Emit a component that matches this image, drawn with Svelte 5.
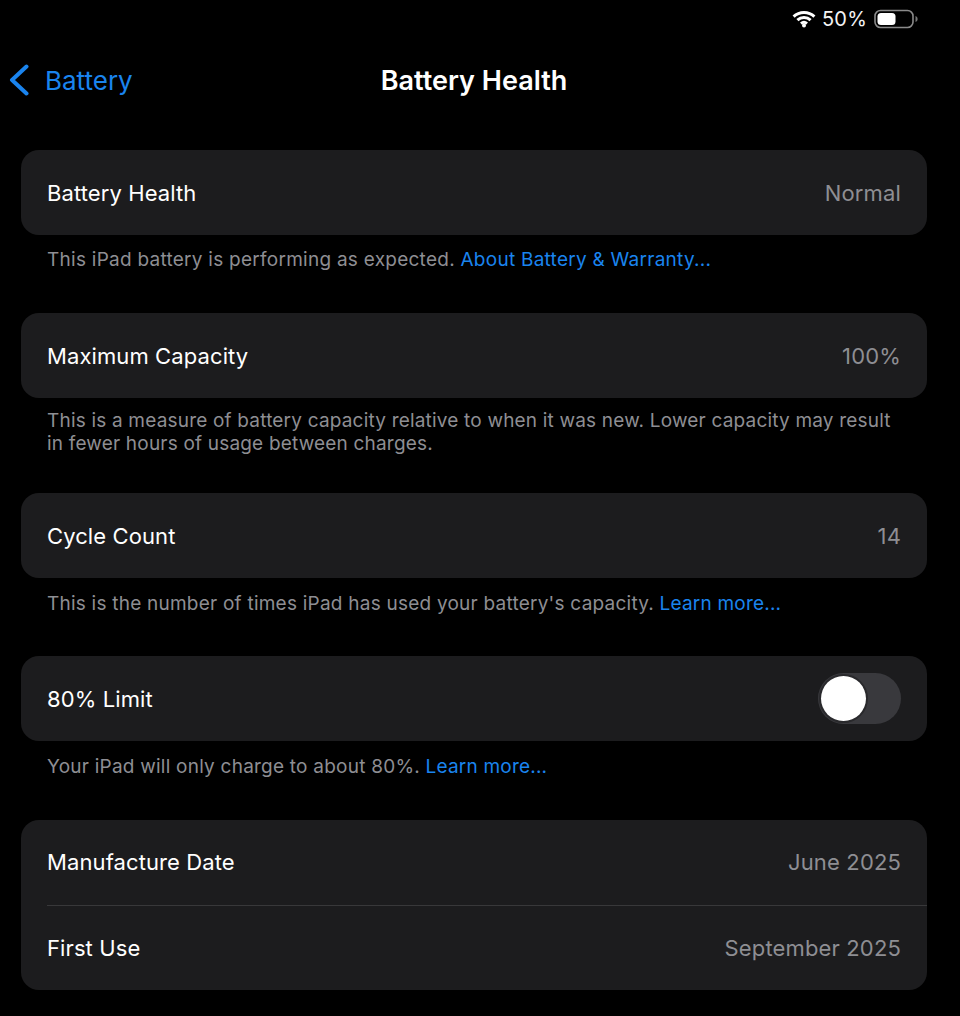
<script>
  const sections = [
    { cls: 'first', rows: [{ l: 'Battery Health', v: 'Normal' }], note: ['This iPad battery is performing as expected. ', 'About Battery & Warranty...'] },
    { cls: 'tall', rows: [{ l: 'Maximum Capacity', v: '100%' }], note: ['This is a measure of battery capacity relative to when it was new. Lower capacity may result in fewer hours of usage between charges.', ''] },
    { cls: 'cycle', rows: [{ l: 'Cycle Count', v: '14' }], note: ['This is the number of times iPad has used your battery\'s capacity. ', 'Learn more...'] },
    { cls: 'limit', rows: [{ l: '80% Limit', toggle: true }], note: ['Your iPad will only charge to about 80%. ', 'Learn more...'] },
    { cls: 'dates', rows: [{ l: 'Manufacture Date', v: 'June 2025' }, { l: 'First Use', v: 'September 2025' }] }
  ];
</script>

<div class="page">
  <div class="status">
    <svg class="wifi" width="24" height="18" viewBox="0 0 24 18">
      <path d="M1.6 6.6 A15 15 0 0 1 22.4 6.6" />
      <path d="M5.4 10.2 A9.6 9.6 0 0 1 18.6 10.2" />
      <path d="M9 13.6 A4.6 4.6 0 0 1 15 13.6" />
      <circle cx="12" cy="15.6" r="2" />
    </svg>
    <span class="pct">50%</span>
    <svg class="batt" width="44" height="20" viewBox="0 0 44 20">
      <rect class="shell" x="1" y="1.5" width="38" height="17" rx="5.5" />
      <rect class="charge" x="3.5" y="4" width="18" height="12" rx="3.5" />
      <path class="nub" d="M41.5 7 C43 7.6 43.6 8.8 43.6 10 C43.6 11.2 43 12.4 41.5 13 Z" />
    </svg>
  </div>

  <header class="nav">
    <div class="back">
      <svg width="22" height="32" viewBox="0 0 22 32">
        <path d="M18.5 2.5 L4 16 L18.5 29.5" />
      </svg>
      <span>Battery</span>
    </div>
    <h1>Battery Health</h1>
  </header>

  <main>
    {#each sections as s}
      <section class={s.cls}>
        <div class="card">
          {#each s.rows as r, i}
            {#if i > 0}<div class="sep"></div>{/if}
            <div class="row">
              <span class="label">{r.l}</span>
              {#if r.toggle}
                <span class="toggle"><span class="knob"></span></span>
              {:else}
                <span class="value">{r.v}</span>
              {/if}
            </div>
          {/each}
        </div>
        {#if s.note}
          <p class="note">{s.note[0]}{#if s.note[1]}<span class="link">{s.note[1]}</span>{/if}</p>
        {/if}
      </section>
    {/each}
  </main>
</div>

<style>
  :global(body) { margin: 0; background: #000; }
  .page {
    width: 960px;
    height: 1016px;
    overflow: hidden;
    background: #000;
    color: #fff;
    font-family: Inter, "Liberation Sans", sans-serif;
  }
  .status {
    height: 38px;
    display: flex;
    align-items: center;
    justify-content: flex-end;
    padding-right: 42px;
    box-sizing: border-box;
  }
  .wifi { margin-right: 6px; }
  .wifi path { fill: none; stroke: #fff; stroke-width: 3; }
  .wifi circle { fill: #fff; }
  .pct { font-size: 20px; letter-spacing: 0.2px; margin-right: 7px; color: #f4f4f4; }
  .shell { fill: none; stroke: #8a8a8a; stroke-width: 1.6; }
  .charge { fill: #fff; }
  .nub { fill: #777; }
  .nav {
    height: 84px;
    position: relative;
    display: flex;
    align-items: center;
    justify-content: center;
    padding-right: 12px;
    margin-bottom: 28px;
  }
  h1 { font-size: 27px; font-weight: 600; margin: 0; }
  .back {
    position: absolute;
    left: 8px;
    top: 50%;
    transform: translateY(-50%);
    display: flex;
    align-items: center;
    gap: 15px;
    color: #1a84ee;
    font-size: 26px;
  }
  .back svg path { fill: none; stroke: #1a84ee; stroke-width: 4; stroke-linecap: round; stroke-linejoin: round; }
  main { padding: 0 33px 0 21px; display: flex; flex-direction: column; }
  .first { margin-bottom: 42px; }
  .tall { margin-bottom: 38px; }
  .cycle { margin-bottom: 41px; }
  .limit { margin-bottom: 42px; }
  .card { background: #1c1c1e; border-radius: 18px; overflow: hidden; }
  .row {
    height: 85px;
    display: flex;
    align-items: center;
    justify-content: space-between;
    padding: 0 26px;
    box-sizing: border-box;
  }
  .dates .row { height: 84.5px; }
  .label { font-size: 22px; letter-spacing: 0.1px; }
  .value { font-size: 22px; color: #8e8e93; letter-spacing: 0.15px; }
  .sep { height: 1px; margin-left: 26px; background: #38383a; }
  .note {
    margin: 14px 26px 0;
    font-size: 19px;
    line-height: 23px;
    color: #8e8e93;
    letter-spacing: 0.23px;
  }
  .first .note { margin-top: 13px; letter-spacing: 0.26px; }
  .tall .note { margin-top: 11px; letter-spacing: 0.19px; }
  .link { color: #1a84ee; letter-spacing: 0.2px; }
  .first .link { letter-spacing: 0.26px; }
  .toggle {
    width: 83px;
    height: 51px;
    border-radius: 26px;
    background: #39393d;
    position: relative;
  }
  .knob {
    position: absolute;
    left: 3px;
    top: 3px;
    width: 45px;
    height: 45px;
    border-radius: 50%;
    background: #fff;
    box-shadow: 0 0 0 2px #29292c;
  }
</style>
